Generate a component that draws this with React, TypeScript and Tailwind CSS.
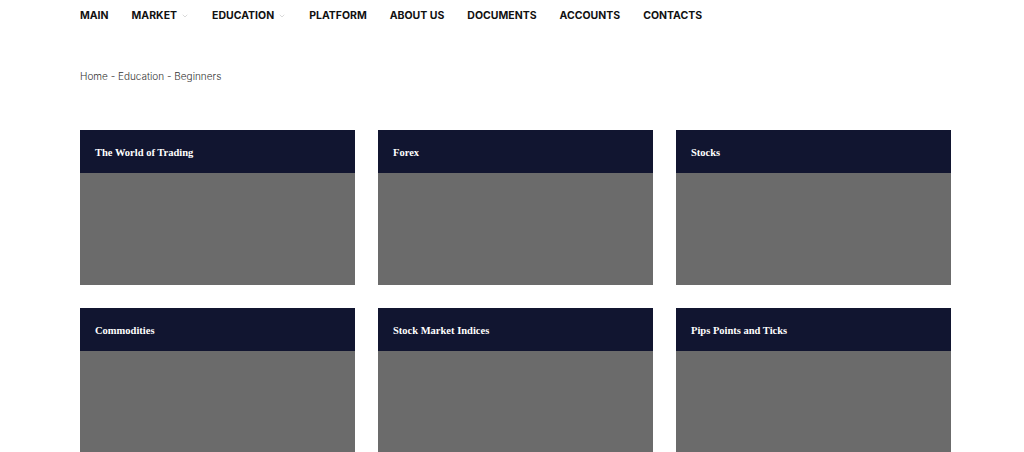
import { ChevronDown } from 'lucide-react';

const navItems = [
  { label: 'MAIN' },
  { label: 'MARKET', caret: true },
  { label: 'EDUCATION', caret: true },
  { label: 'PLATFORM' },
  { label: 'ABOUT US' },
  { label: 'DOCUMENTS' },
  { label: 'ACCOUNTS' },
  { label: 'CONTACTS' },
];

const cards = [
  'The World of Trading',
  'Forex',
  'Stocks',
  'Commodities',
  'Stock Market Indices',
  'Pips Points and Ticks',
];

export default function App() {
  return (
    <div className="min-h-[452px] w-full bg-white overflow-hidden" style={{ fontFamily: 'Inter, "DejaVu Sans", sans-serif' }}>
      <nav className="flex items-center gap-[23px] pl-[80px] h-[31px]">
        {navItems.map((item) => (
          <div key={item.label} className="flex items-center gap-[4px]">
            <span className="text-[10.5px] font-bold text-[#111111]">{item.label}</span>
            {item.caret && <ChevronDown className="w-[8px] h-[8px] text-[#b5b5b5]" strokeWidth={1.5} />}
          </div>
        ))}
      </nav>

      <div className="pl-[80px] pt-[38px] text-[10px] font-light text-[#333333]">
        Home - Education - Beginners
      </div>

      <div className="grid grid-cols-[275px_275px_275px] gap-[23px] pl-[80px] pt-[46px]">
        {cards.map((title) => (
          <div key={title} className="flex flex-col">
            <div className="h-[43px] bg-[#111530] flex items-center px-[15px] pt-[2px]">
              <span
                className="text-[10.5px] font-bold text-white"
                style={{ fontFamily: '"Liberation Serif", "DejaVu Serif", serif' }}
              >
                {title}
              </span>
            </div>
            <div className="h-[112px] bg-[#6b6b6b]" />
          </div>
        ))}
      </div>
    </div>
  );
}
